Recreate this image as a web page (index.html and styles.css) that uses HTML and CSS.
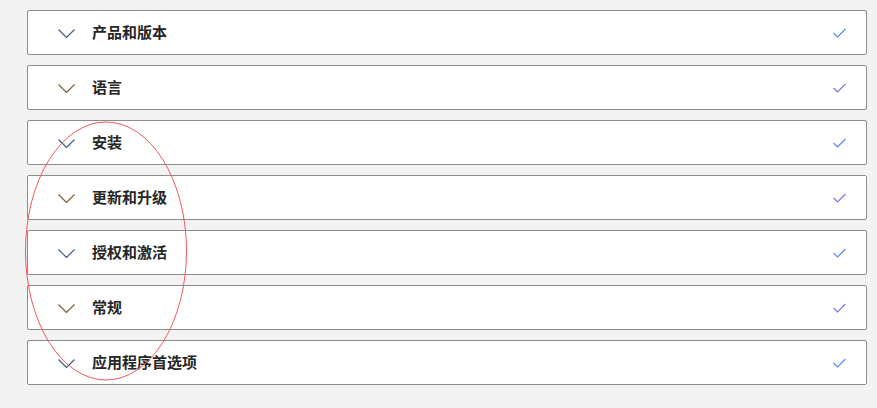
FILE: index.html
```html
<!DOCTYPE html>
<html lang="zh-CN">
    <head>
        <meta charset="UTF-8">
        <meta name="viewport" content="width=device-width, initial-scale=1.0">
        <title>设置</title>
        <link rel="stylesheet" href="styles.css">
    </head>
    <body>
        <div class="sections">
            <div class="section blue">
                <svg class="chevron" viewBox="0 0 17 9"><path d="M0.5 0.5 L8.5 8.5 L16.5 0.5"/></svg>
                <span class="title">产品和版本</span>
                <svg class="check" viewBox="0 0 13 10"><path d="M0.5 5 L4.5 9 L12.5 1"/></svg>
            </div>
            <div class="section brown">
                <svg class="chevron" viewBox="0 0 17 9"><path d="M0.5 0.5 L8.5 8.5 L16.5 0.5"/></svg>
                <span class="title">语言</span>
                <svg class="check purple" viewBox="0 0 13 10"><path d="M0.5 5 L4.5 9 L12.5 1"/></svg>
            </div>
            <div class="section blue">
                <svg class="chevron" viewBox="0 0 17 9"><path d="M0.5 0.5 L8.5 8.5 L16.5 0.5"/></svg>
                <span class="title">安装</span>
                <svg class="check" viewBox="0 0 13 10"><path d="M0.5 5 L4.5 9 L12.5 1"/></svg>
            </div>
            <div class="section brown">
                <svg class="chevron" viewBox="0 0 17 9"><path d="M0.5 0.5 L8.5 8.5 L16.5 0.5"/></svg>
                <span class="title">更新和升级</span>
                <svg class="check purple" viewBox="0 0 13 10"><path d="M0.5 5 L4.5 9 L12.5 1"/></svg>
            </div>
            <div class="section blue">
                <svg class="chevron" viewBox="0 0 17 9"><path d="M0.5 0.5 L8.5 8.5 L16.5 0.5"/></svg>
                <span class="title">授权和激活</span>
                <svg class="check" viewBox="0 0 13 10"><path d="M0.5 5 L4.5 9 L12.5 1"/></svg>
            </div>
            <div class="section brown">
                <svg class="chevron" viewBox="0 0 17 9"><path d="M0.5 0.5 L8.5 8.5 L16.5 0.5"/></svg>
                <span class="title">常规</span>
                <svg class="check purple" viewBox="0 0 13 10"><path d="M0.5 5 L4.5 9 L12.5 1"/></svg>
            </div>
            <div class="section blue">
                <svg class="chevron" viewBox="0 0 17 9"><path d="M0.5 0.5 L8.5 8.5 L16.5 0.5"/></svg>
                <span class="title">应用程序首选项</span>
                <svg class="check" viewBox="0 0 13 10"><path d="M0.5 5 L4.5 9 L12.5 1"/></svg>
            </div>
        </div>

        <!-- hand-drawn annotation -->
        <svg class="mark" width="164" height="262" viewBox="0 0 164 262">
            <ellipse cx="82" cy="131" rx="80.5" ry="129"/>
        </svg>
    </body>
</html>
```

FILE: styles.css
```css
body { margin: 0; background: #f3f3f3; font-family: "Noto Sans CJK SC", "Microsoft YaHei", sans-serif; }

.sections { display: flex; flex-direction: column; gap: 10px; padding: 10px 0 0 27px; width: 840px; }

.section {
    display: flex;
    align-items: center;
    height: 43px;
    background: #ffffff;
    border: 1px solid #8c8c8c;
    border-radius: 2px;
    padding: 0 20px 0 30px;
}

.chevron { width: 17px; height: 9px; flex: none; margin-top: 2px; }
.chevron path { fill: none; stroke-width: 1.2; }
.blue .chevron path { stroke: #3f5f86; }
.brown .chevron path { stroke: #7a5f3c; }

.title { margin-left: 17px; margin-bottom: 2px; font-size: 15px; font-weight: bold; color: #262626; flex: 1; }

.check { width: 13px; height: 10px; flex: none; margin-top: 1px; }
.check path { fill: none; stroke: #4f86e8; stroke-width: 1.1; }
.check.purple path { stroke: #7a74e0; }

.mark { position: absolute; left: 24px; top: 120px; }
.mark ellipse { fill: none; stroke: #f0585f; stroke-width: 1; }
```
